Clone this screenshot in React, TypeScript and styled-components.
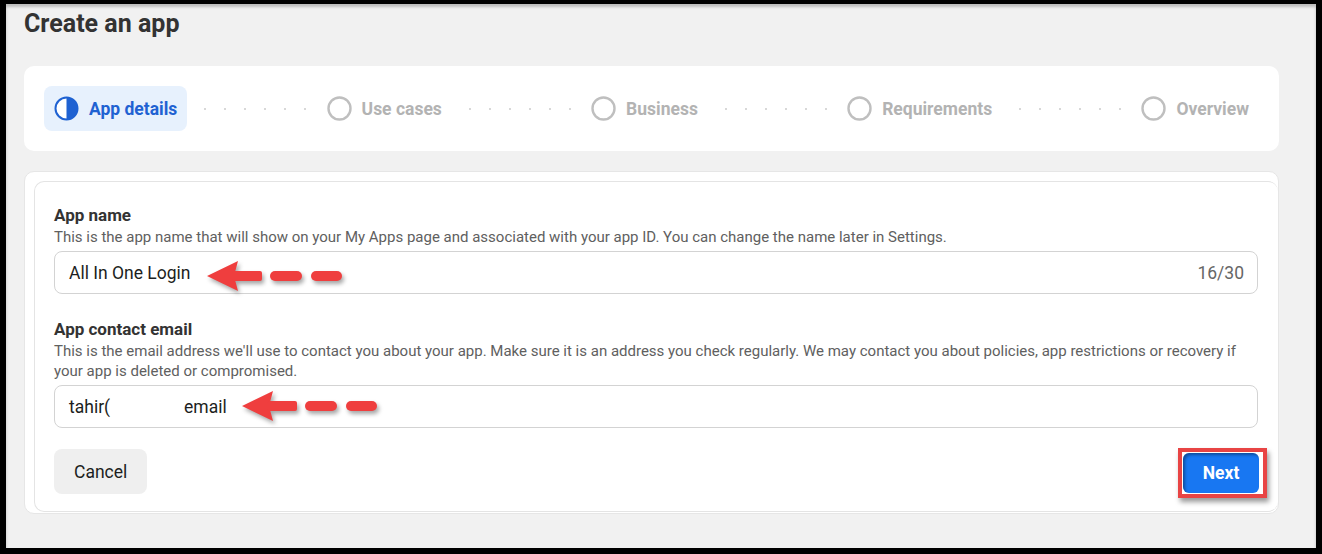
import styled, { createGlobalStyle } from "styled-components";

const GlobalStyle = createGlobalStyle`
  html, body {
    margin: 0;
    padding: 0;
    background: #000;
  }
  body {
    font-family: Roboto, "Liberation Sans", Arial, sans-serif;
  }
  * {
    box-sizing: border-box;
  }
`;

const steps = ["App details", "Use cases", "Business", "Requirements", "Overview"];

const ActiveIcon = () => (
  <svg width="25" height="25" viewBox="0 0 25 25">
    <circle cx="12.5" cy="12.5" r="11" fill="#fff" stroke="#1f62d2" strokeWidth="2" />
    <path d="M12.5 1.5 A11 11 0 0 1 12.5 23.5 Z" fill="#1f62d2" />
  </svg>
);

const EmptyIcon = () => (
  <svg width="25" height="25" viewBox="0 0 25 25">
    <circle cx="12.5" cy="12.5" r="11" fill="none" stroke="#bfbfbf" strokeWidth="2.4" />
  </svg>
);

const Arrow = ({ top, left }: { top: number; left: number }) => (
  <ArrowSvg width="140" height="34" viewBox="0 0 140 34" style={{ top, left }}>
    <g fill="#ef3e3e">
      <polygon points="0,15 31,0 27,15 31,30" />
      <rect x="25" y="10" width="30" height="10" rx="2" />
      <rect x="63" y="10" width="32" height="10" rx="5" />
      <rect x="104" y="10" width="31" height="10" rx="5" />
    </g>
  </ArrowSvg>
);

const App = () => {
  return (
    <Frame>
      <GlobalStyle />
      <Title>Create an app</Title>
      <StepperCard>
        {steps.map((s, i) => (
          <StepGroup key={s} $last={i === steps.length - 1}>
            <Step $active={i === 0}>
              {i === 0 ? <ActiveIcon /> : <EmptyIcon />}
              <StepLabel $active={i === 0}>{s}</StepLabel>
            </Step>
            {i < steps.length - 1 && <Connector />}
          </StepGroup>
        ))}
      </StepperCard>
      <CardStack>
        <FormCard>
          <Field>
            <Label>App name</Label>
            <Help>
              This is the app name that will show on your My Apps page and associated with your app
              ID. You can change the name later in Settings.
            </Help>
            <InputBox>
              <InputText>All In One Login</InputText>
              <Counter>16/30</Counter>
              <Arrow top={9} left={152} />
            </InputBox>
          </Field>
          <Field>
            <Label>App contact email</Label>
            <Help>
              This is the email address we'll use to contact you about your app. Make sure it is an
              address you check regularly. We may contact you about policies, app restrictions or
              recovery if your app is deleted or compromised.
            </Help>
            <InputBox>
              <InputText>
                tahir(<Redacted />email
              </InputText>
              <Arrow top={5} left={187} />
            </InputBox>
          </Field>
          <Actions>
            <CancelButton>Cancel</CancelButton>
            <Highlight>
              <NextButton>Next</NextButton>
            </Highlight>
          </Actions>
        </FormCard>
      </CardStack>
    </Frame>
  );
};
export default App;

const Frame = styled.div`
  margin: 4px 6px 6px 6px;
  height: 544px;
  background: #f1f1f1;
  padding: 5px 37px 0 18px;
  box-shadow: inset 0 3px 3px rgba(0, 0, 0, 0.22);
  overflow: hidden;
`;

const Title = styled.h1`
  margin: 0;
  font-size: 25px;
  line-height: 29px;
  font-weight: 700;
  color: #333;
`;

const StepperCard = styled.div`
  margin-top: 28px;
  height: 85px;
  background: #fff;
  border-radius: 10px;
  padding: 0 20px;
  display: flex;
  align-items: center;
`;

const StepGroup = styled.div<{ $last: boolean }>`
  display: flex;
  align-items: center;
  flex: ${(p) => (p.$last ? "0 0 auto" : "1 1 auto")};
`;

const Step = styled.div<{ $active: boolean }>`
  display: flex;
  align-items: center;
  gap: 10px;
  height: 45px;
  padding: 0 10px;
  border-radius: 8px;
  background: ${(p) => (p.$active ? "#e7f1fd" : "transparent")};
  flex: 0 0 auto;
`;

const StepLabel = styled.span<{ $active: boolean }>`
  font-size: 17.5px;
  font-weight: 700;
  color: ${(p) => (p.$active ? "#1f62d2" : "#b3b3b3")};
  white-space: nowrap;
`;

const Connector = styled.div`
  flex: 1;
  height: 4px;
  margin: 0 4px;
  background-image: radial-gradient(circle, #d8d8d8 1px, transparent 1.5px);
  background-size: 20px 4px;
  background-position: 4px 0;
`;

const CardStack = styled.div`
  margin-top: 20px;
  background: #fff;
  border: 1px solid #e6e6e6;
  border-radius: 10px;
  padding: 9px 0 1px 9px;
`;

const FormCard = styled.div`
  background: #fff;
  border: 1px solid #e4e4e4;
  border-right: none;
  border-radius: 10px;
  padding: 23px 20px 13px 19px;
`;

const Field = styled.div`
  display: flex;
  flex-direction: column;
  & + & {
    margin-top: 25px;
  }
`;

const Label = styled.div`
  font-size: 17px;
  line-height: 20px;
  font-weight: 700;
  color: #333;
`;

const Help = styled.div`
  margin-top: 2px;
  font-size: 15px;
  line-height: 20px;
  color: #606060;
`;

const InputBox = styled.div`
  position: relative;
  margin-top: 4px;
  height: 43px;
  border: 1px solid #d3d3d3;
  border-radius: 8px;
  padding: 0 13px 0 14px;
  display: flex;
  align-items: center;
  justify-content: space-between;
`;

const InputText = styled.span`
  font-size: 17.5px;
  color: #1c1e21;
  white-space: nowrap;
`;

const Redacted = styled.span`
  display: inline-block;
  width: 74px;
`;

const Counter = styled.span`
  font-size: 17.5px;
  color: #666;
`;

const ArrowSvg = styled.svg`
  position: absolute;
  filter: drop-shadow(2px 3px 2px rgba(0, 0, 0, 0.35));
`;

const Actions = styled.div`
  margin-top: 20px;
  display: flex;
  align-items: flex-start;
  justify-content: space-between;
`;

const CancelButton = styled.button`
  margin-top: 1px;
  height: 45px;
  padding: 0 20px;
  border: none;
  border-radius: 8px;
  background: #efefef;
  font-family: inherit;
  font-size: 17.5px;
  color: #1c1e21;
`;

const Highlight = styled.div`
  margin-right: -9px;
  border: 4px solid #e84444;
  padding: 1px 4px 1px 1px;
  box-shadow: 2px 4px 5px rgba(0, 0, 0, 0.4);
  display: flex;
`;

const NextButton = styled.button`
  width: 76px;
  height: 40px;
  border: none;
  border-radius: 6px;
  background: #1877f2;
  font-family: inherit;
  font-size: 17.5px;
  font-weight: 700;
  color: #fff;
  box-shadow: inset 2px 2px 3px rgba(0, 0, 0, 0.35);
`;
